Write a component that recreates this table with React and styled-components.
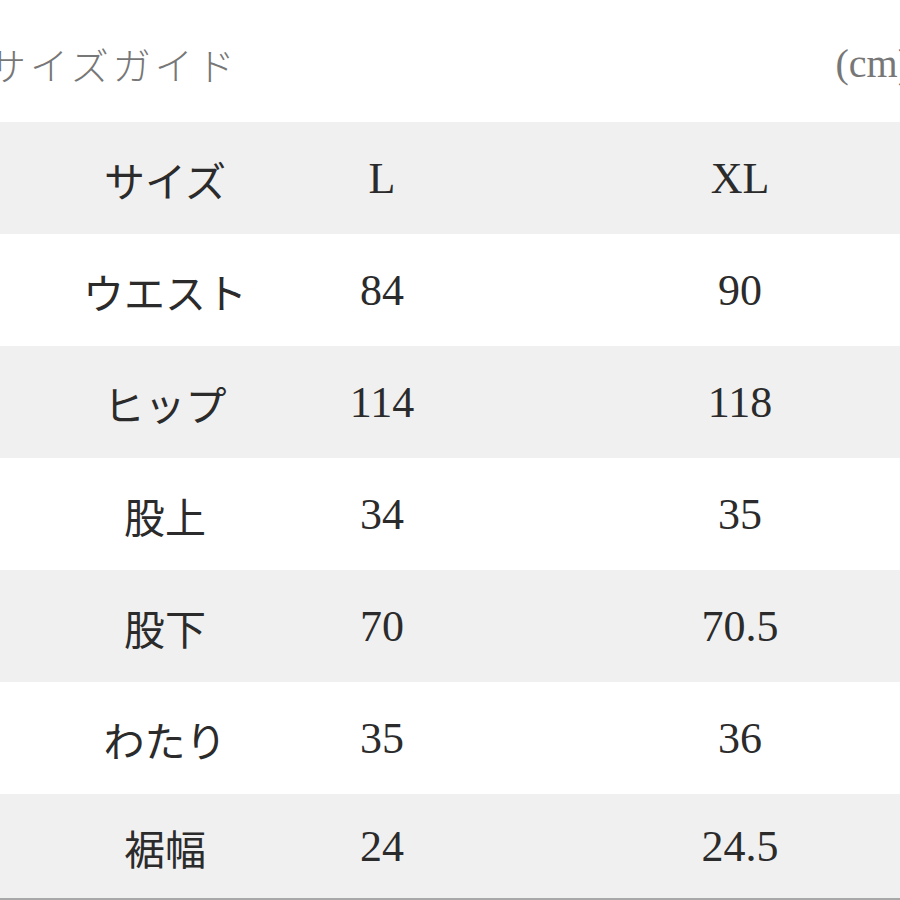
import styled, { createGlobalStyle } from "styled-components";

const GlobalStyle = createGlobalStyle`
  html, body {
    margin: 0;
    padding: 0;
    background: #ffffff;
    overflow: hidden;
  }
`;

const rows = [
  { label: "サイズ", l: "L", xl: "XL" },
  { label: "ウエスト", l: "84", xl: "90" },
  { label: "ヒップ", l: "114", xl: "118" },
  { label: "股上", l: "34", xl: "35" },
  { label: "股下", l: "70", xl: "70.5" },
  { label: "わたり", l: "35", xl: "36" },
  { label: "裾幅", l: "24", xl: "24.5" },
];

export default function App() {
  return (
    <>
      <GlobalStyle />
      <Page>
        <Header>
          <Title>サイズガイド</Title>
          <Unit>(cm)</Unit>
        </Header>
        <Table>
          {rows.map((row, index) => (
            <Row key={row.label} $shaded={index % 2 === 0} $last={index === rows.length - 1}>
              <Label>{row.label}</Label>
              <Value>{row.l}</Value>
              <Value>{row.xl}</Value>
            </Row>
          ))}
        </Table>
      </Page>
    </>
  );
}

const Page = styled.div`
  width: 900px;
  height: 900px;
  overflow: hidden;
`;

const Header = styled.div`
  width: 923px;
  height: 122px;
  margin-left: -12px;
  display: flex;
  align-items: center;
  justify-content: space-between;
  padding-top: 4px;
  box-sizing: border-box;
  color: #777777;
`;

const Title = styled.span`
  font-family: "Noto Sans CJK JP", sans-serif;
  font-weight: 300;
  font-size: 38px;
  letter-spacing: 4px;
`;

const Unit = styled.span`
  font-family: "Liberation Serif", serif;
  font-size: 40px;
`;

const Table = styled.div`
  display: flex;
  flex-direction: column;
`;

const Row = styled.div`
  display: grid;
  grid-template-columns: 330px 104px 612px;
  align-items: center;
  height: ${(p) => (p.$last ? "104px" : "112px")};
  background: ${(p) => (p.$shaded ? "#f0f0f0" : "#ffffff")};
  border-bottom: ${(p) => (p.$last ? "2px solid #a8a8a8" : "none")};
  color: #2b2b2b;
`;

const Label = styled.div`
  text-align: center;
  font-family: "Noto Sans CJK JP", sans-serif;
  font-weight: 400;
  font-size: 41px;
  padding-top: 2px;
`;

const Value = styled.div`
  text-align: center;
  font-family: "Liberation Serif", serif;
  font-size: 44px;
  white-space: nowrap;
`;
